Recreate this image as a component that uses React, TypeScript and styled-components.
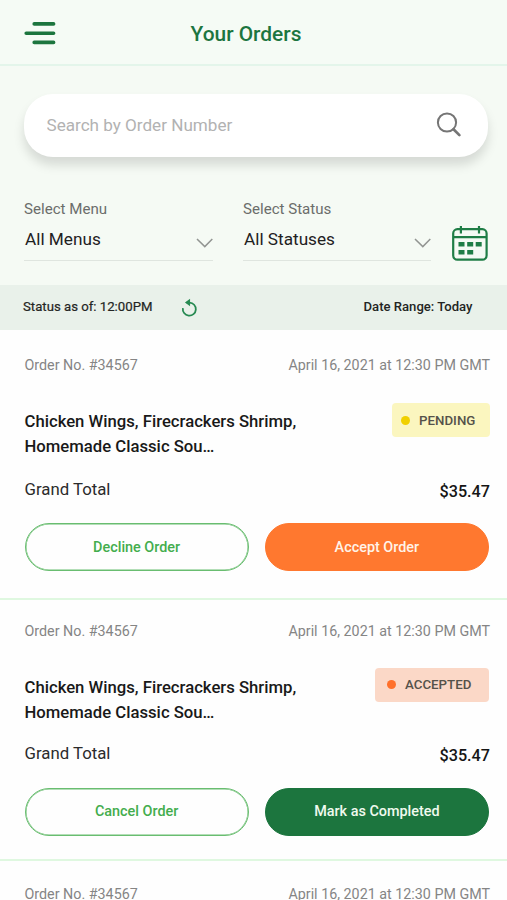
import React from "react";
import styled, { createGlobalStyle } from "styled-components";

const GlobalStyle = createGlobalStyle`
  * { box-sizing: border-box; }
  body { margin: 0; background: #fefefe; font-family: Roboto, "Liberation Sans", sans-serif; }
  button, input { font-family: inherit; }
`;

const Page = styled.div`
  width: 507px;
  height: 900px;
  overflow: hidden;
  background: #fefefe;
`;

const Header = styled.header`
  display: grid;
  grid-template-columns: 64px 1fr 79px;
  align-items: center;
  height: 66px;
  background: #f5fbf5;
  border-bottom: 2px solid #e3f5ea;
`;

const MenuButton = styled.button`
  display: flex;
  padding: 2px 0 0 24px;
  border: 0;
  background: none;
`;

const Title = styled.h1`
  margin: 4px 0 0;
  font-size: 20.9px;
  font-weight: 500;
  line-height: 24px;
  text-align: center;
  color: #1c7540;
`;

const Filters = styled.section`
  height: 219px;
  padding: 28px 19px 0 24px;
  background: #f5faf4;
`;

const SearchBox = styled.label`
  display: flex;
  align-items: center;
  justify-content: space-between;
  height: 63px;
  padding: 0 26px 2px 22.5px;
  border-radius: 29px;
  background: #fff;
  box-shadow: 0 8px 11px rgba(0, 0, 0, 0.13);
`;

const SearchInput = styled.input`
  width: 300px;
  padding: 0;
  border: 0;
  outline: 0;
  background: none;
  font-size: 17.1px;
  color: #777;
  &::placeholder { color: #b2b2b2; opacity: 1; }
`;

const SelectRow = styled.div`
  display: grid;
  grid-template-columns: 189px 188px 36px;
  column-gap: 30px;
  margin-top: 42px;
`;

const Field = styled.div`
  border-bottom: 1px solid #dfe5df;
  height: 62px;
`;

const FieldLabel = styled.div`
  line-height: 21px;
  font-size: 15.1px;
  color: #6b6d6b;
`;

const FieldValue = styled.div`
  display: flex;
  justify-content: space-between;
  margin-top: 9px;
  padding-left: 1px;
  line-height: 20px;
  font-size: 17.2px;
  color: #1f211f;
  svg { margin-top: 9px; }
`;

const CalendarButton = styled.button`
  display: flex;
  align-self: end;
  margin: 0 0 0 -9.5px;
  padding: 0;
  border: 0;
  background: none;
`;

const StatusBar = styled.div`
  display: flex;
  align-items: center;
  height: 45px;
  padding: 0 34.5px 2px 23px;
  background: #e9f1ea;
  color: #232523;
  svg { margin: 2px auto 0 28.5px; }
`;

const StatusText = styled.span`
  font-size: 13.2px;
  -webkit-text-stroke: 0.2px #232523;
`;

const DateRange = styled.span`
  font-size: 13.1px;
  font-weight: 500;
`;

const Card = styled.article<{ $top: number; $bottom: number }>`
  padding: ${(p) => p.$top}px 17px ${(p) => p.$bottom}px 24px;
  border-bottom: 2px solid #dff8e0;
`;

const Meta = styled.div`
  display: flex;
  justify-content: space-between;
  padding-left: 0.5px;
  line-height: 20px;
  font-size: 14.3px;
  color: #858585;
`;

const Summary = styled.div<{ $gap: number }>`
  display: flex;
  justify-content: space-between;
  align-items: flex-start;
  margin-top: ${(p) => p.$gap}px;
`;

const Items = styled.h2`
  margin: 0;
  padding-left: 0.5px;
  font-size: 16.7px;
  font-weight: 500;
  line-height: 24.7px;
  color: #191919;
`;

const Badge = styled.div<{ $tone: "pending" | "accepted" }>`
  display: flex;
  align-items: center;
  gap: 9px;
  width: ${(p) => (p.$tone === "pending" ? 98 : 114)}px;
  height: 34px;
  margin-top: ${(p) => (p.$tone === "pending" ? -7 : -8)}px;
  margin-right: ${(p) => (p.$tone === "pending" ? 0 : 1)}px;
  padding-left: ${(p) => (p.$tone === "pending" ? 9 : 12)}px;
  border-radius: 4px;
  background: ${(p) => (p.$tone === "pending" ? "#fbf6bf" : "#fbd8c7")};
  font-size: 13.3px;
  font-weight: 500;
  color: #55524a;
  &::before {
    content: "";
    width: 9px;
    height: 9px;
    border-radius: 50%;
    background: ${(p) => (p.$tone === "pending" ? "#f0d000" : "#ff702a")};
  }
`;

const TotalRow = styled.div<{ $gap: number }>`
  display: flex;
  justify-content: space-between;
  height: 22px;
  margin-top: ${(p) => p.$gap}px;
  padding-left: 0.5px;
  line-height: 20px;
  font-size: 16.8px;
  color: #2b2b2b;
`;

const Amount = styled.span`
  padding-top: 3px;
  font-size: 16.2px;
  font-weight: 500;
  color: #151515;
`;

const Actions = styled.div`
  display: grid;
  grid-template-columns: 1fr 1fr;
  gap: 16px;
  margin: 22.4px 1px 0 0.5px;
`;

const tones = {
  outline: { bg: "#fefefe", line: "#69bd70", text: "#43ad4d" },
  orange: { bg: "#ff782f", line: "#ff782f", text: "#fff3e8" },
  green: { bg: "#1c753e", line: "#1c753e", text: "#f0faee" },
};

const Action = styled.button<{ $tone: keyof typeof tones }>`
  height: 48px;
  padding: 0;
  border: 1px solid ${(p) => tones[p.$tone].line};
  border-radius: 24px;
  background: ${(p) => tones[p.$tone].bg};
  box-shadow: inset 0 0 0 0.5px ${(p) => tones[p.$tone].line};
  font-size: 14.4px;
  font-weight: 500;
  color: ${(p) => tones[p.$tone].text};
`;

const MenuIcon = () => (
  <svg width="32" height="26" viewBox="0 0 32 26" fill="none" stroke="#1c753e" strokeWidth="3.6" strokeLinecap="round">
    <path d="M10.2 3.9H29.6M2.2 13.2H29.6M10.2 22.4H29.6" />
  </svg>
);

const SearchIcon = () => (
  <svg width="26" height="26" viewBox="0 0 26 26" fill="none" stroke="#757575" strokeLinecap="round">
    <circle cx="11" cy="10.5" r="9.1" strokeWidth="2" />
    <path d="M17.5 17.2L23.4 23.1" strokeWidth="2.7" />
  </svg>
);

const Chevron = () => (
  <svg width="17" height="10" viewBox="0 0 17 10" fill="none" stroke="#929592" strokeWidth="1.5">
    <path d="M1 1L8.8 8.6L16.3 1" />
  </svg>
);

const CalendarIcon = () => (
  <svg width="36" height="36" viewBox="0 0 36 36" fill="none" stroke="#1f7d46" strokeWidth="2.2">
    <rect x="1.2" y="4.2" width="33.4" height="30.4" rx="4.2" />
    <path d="M1.2 12.2H34.6M8.9 1V8.4M27 1V8.4" />
    <path fill="#1f7d46" stroke="none" d="M6.5 17h6v4.6h-6zM15.2 17h6v4.6h-6zM23.7 17h6v4.6h-6zM6.5 25h6v4.6h-6zM15.2 25h6v4.6h-6z" />
  </svg>
);

const RefreshIcon = () => (
  <svg width="17" height="19" viewBox="0 0 18 20" fill="none">
    <path d="M2 10.6A6.9 6.9 0 1 0 9 4.8H6" stroke="#278a52" strokeWidth="1.9" />
    <path d="M9.6 0.8V8.8L4.2 4.8Z" fill="#278a52" />
  </svg>
);

type Order = {
  top: number;
  bottom: number;
  itemsGap: number;
  totalGap: number;
  status: "pending" | "accepted";
  secondary: string;
  primary: string;
  tone: "orange" | "green";
};

const orders: Order[] = [
  { top: 25, bottom: 26.5, itemsGap: 35, totalGap: 19.6, status: "pending", secondary: "Decline Order", primary: "Accept Order", tone: "orange" },
  { top: 21, bottom: 23.1, itemsGap: 35, totalGap: 18, status: "accepted", secondary: "Cancel Order", primary: "Mark as Completed", tone: "green" },
  { top: 23.5, bottom: 24, itemsGap: 35, totalGap: 19, status: "pending", secondary: "Decline Order", primary: "Accept Order", tone: "orange" },
];

const OrderCard = ({ order }: { order: Order }) => (
  <Card $top={order.top} $bottom={order.bottom}>
    <Meta>
      <span>Order No. #34567</span>
      <span>April 16, 2021 at 12:30 PM GMT</span>
    </Meta>
    <Summary $gap={order.itemsGap}>
      <Items>
        Chicken Wings, Firecrackers Shrimp,
        <br />
        Homemade Classic Sou…
      </Items>
      <Badge $tone={order.status}>{order.status.toUpperCase()}</Badge>
    </Summary>
    <TotalRow $gap={order.totalGap}>
      <span>Grand Total</span>
      <Amount>$35.47</Amount>
    </TotalRow>
    <Actions>
      <Action $tone="outline">{order.secondary}</Action>
      <Action $tone={order.tone}>{order.primary}</Action>
    </Actions>
  </Card>
);

export default function App() {
  return (
    <Page>
      <GlobalStyle />
      <Header>
        <MenuButton aria-label="Menu"><MenuIcon /></MenuButton>
        <Title>Your Orders</Title>
      </Header>
      <Filters>
        <SearchBox>
          <SearchInput placeholder="Search by Order Number" />
          <SearchIcon />
        </SearchBox>
        <SelectRow>
          <Field>
            <FieldLabel>Select Menu</FieldLabel>
            <FieldValue>All Menus<Chevron /></FieldValue>
          </Field>
          <Field>
            <FieldLabel>Select Status</FieldLabel>
            <FieldValue>All Statuses<Chevron /></FieldValue>
          </Field>
          <CalendarButton aria-label="Choose dates"><CalendarIcon /></CalendarButton>
        </SelectRow>
      </Filters>
      <StatusBar>
        <StatusText>Status as of: 12:00PM</StatusText>
        <RefreshIcon />
        <DateRange>Date Range: Today</DateRange>
      </StatusBar>
      {orders.map((order, i) => <OrderCard key={i} order={order} />)}
    </Page>
  );
}
